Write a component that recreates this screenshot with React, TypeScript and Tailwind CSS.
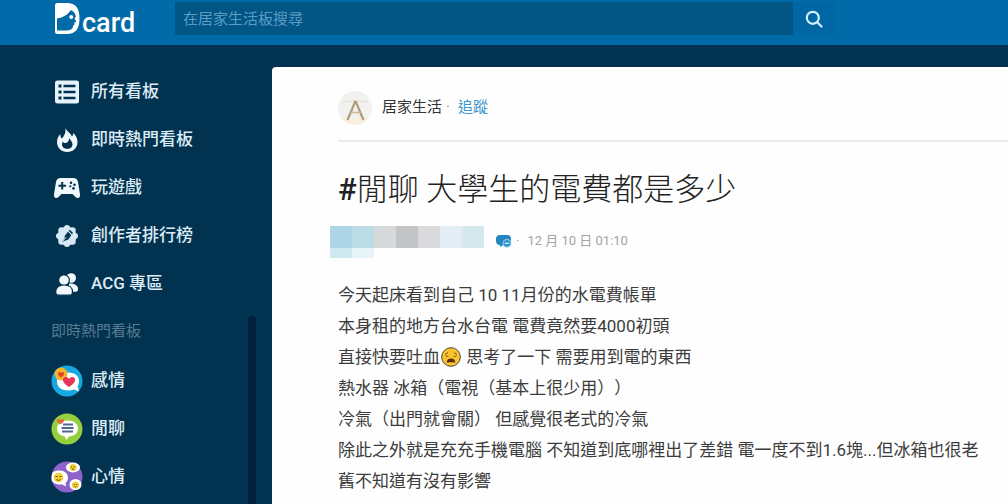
import type { ReactNode } from 'react';

type NavItem = { label: string; icon: ReactNode };

const Logo = () => (
  <a href="/" aria-label="Dcard" className="flex h-full items-center gap-0.5 text-white">
    <svg viewBox="0 0 25 31" className="mb-2 h-[31px] w-[25px]" aria-hidden="true">
      <path d="M0 2.500Q0 0 2.500 0H12c8.500 0 12.500 5 12.500 15.500S20.500 31 12 31H2.500Q0 31 0 28.500z" fill="#fff" />
      <path
        d="M2 15.500c6-1 11.500-4 13.800-8.500 3 1.300 4.600 3.500 5 6.500l-1.300 2 1.800 3.200-2 .8.400 2-1.500.9-.6 2.600c-1.600 1.800-3.600 2.500-6.100 2.500H2z"
        fill="#016aa8"
      />
      <circle cx="16.200" cy="14" r="2" fill="#fff" />
    </svg>
    <span className="text-[27px] leading-8 font-medium">card</span>
  </a>
);

const ListIcon = () => (
  <svg viewBox="0 0 24 24" className="size-6" aria-hidden="true">
    <rect x="0" y="0.500" width="24" height="23" rx="2.500" fill="#e6f3fb" />
    <g fill="#01324f">
      <path d="M3.500 4.500h3v3h-3zM3.500 10.500h3v3h-3zM3.500 16.500h3v3h-3z" />
      <path d="M8.500 4.800h12v2.500h-12zM8.500 10.800h12v2.500h-12zM8.500 16.800h12v2.500h-12z" />
    </g>
  </svg>
);

const FireIcon = () => (
  <svg viewBox="0 0 24 24" className="size-6" aria-hidden="true">
    <path
      d="M10.500 0c.8 3 5 5 6.500 8.500.8-.8 1.200-2.300 1.300-3.500C21 7.500 22.500 10.500 22.500 14c0 6-4.500 10-10.200 10S2 20 2 14.200C2 10.700 3.500 8 5.200 6c0 2 .6 3.600 1.800 4.400C9.500 8 11 4 10.500 0z"
      fill="#f2f9fd"
    />
    <path d="M14.500 10c.3 2 3 3.500 3 6.300 0 2.800-2.200 4.700-5.200 4.700s-5.300-1.900-5.300-4.700c0-1 .3-1.800.8-2.500.8 1 1.700 1.300 2.700 1.200 2.500-.3 3.500-2.500 4-5z" fill="#01324f" />
  </svg>
);

const GameIcon = () => (
  <svg viewBox="0 0 26 24" className="h-6 w-[26px]" aria-hidden="true">
    <path d="M7 2h12c3.200 0 4.400 1.500 5 4l2 12.500c.4 3.500-2.500 4.500-4.500 2.500L18.500 18h-11L4.500 21c-2 2-4.900 1-4.500-2.500L2 6c.6-2.500 1.800-4 5-4z" fill="#f2f9fd" />
    <path d="M7.200 6h2v2.700H12v2H9.200v2.700h-2v-2.700H4.500v-2h2.700z" fill="#01324f" />
    <g fill="#01324f">
      <circle cx="17" cy="6.800" r="1.300" />
      <circle cx="16.300" cy="10.300" r="1.100" />
      <circle cx="20.500" cy="8.800" r="1.300" />
      <circle cx="19.500" cy="12.400" r="1.300" />
    </g>
  </svg>
);

const CreatorIcon = () => (
  <svg viewBox="0 0 24 24" className="size-6" aria-hidden="true">
    <g fill="#d6e7f5">
      <circle cx="12" cy="12" r="9.500" />
      <circle cx="12" cy="4" r="3" />
      <circle cx="17.700" cy="6.300" r="3" />
      <circle cx="20" cy="12" r="3" />
      <circle cx="17.700" cy="17.700" r="3" />
      <circle cx="12" cy="20" r="3" />
      <circle cx="6.300" cy="17.700" r="3" />
      <circle cx="4" cy="12" r="3" />
      <circle cx="6.300" cy="6.300" r="3" />
    </g>
    <path d="M14.800 5.800l3.200 3.200-1 1.200-3.300-3.300zM12.900 7.700l3.400 3.400-3 4.400-6.300 2.300 2.600-3.400.1-2.500z" fill="#01324f" />
    <path d="M8 17l3.500-4" stroke="#d6e7f5" strokeWidth="0.800" />
  </svg>
);

const PeopleIcon = () => (
  <svg viewBox="0 0 24 24" className="size-6" aria-hidden="true">
    <g fill="#f2f9fd">
      <circle cx="16.200" cy="6" r="4.800" />
      <path d="M14 11.500c5.500-.5 9 2 9 5.500 0 2-.5 2.700-2.500 2.700H14z" />
    </g>
    <g fill="#f2f9fd" stroke="#01324f" strokeWidth="1.200">
      <circle cx="9" cy="8.200" r="5.400" />
      <path d="M9 13c5 0 8.500 2.500 8.500 6.700 0 2.500-.8 3.500-3 3.500H3.700c-2.200 0-3-1-3-3.500C.7 15.500 4 13 9 13z" />
    </g>
  </svg>
);

const LoveIcon = () => (
  <svg viewBox="0 0 32 32" className="size-8" aria-hidden="true">
    <circle cx="16" cy="16" r="15.500" fill="#18a8e0" />
    <path d="M17 7.500c7 0 11 3.500 11 8.500 0 2.500-.6 4-1.500 5.200L28 26.500l-5-2c-1.700.7-3.700 1-6 1-7 0-11-4-11-9s4-9 11-9z" fill="#fff" />
    <circle cx="10" cy="9" r="6.500" fill="#f6b42c" />
    <path d="M10 12.500C7.500 10.800 6.500 9.500 7 8c.5-1.300 2.200-1.300 3 0 .8-1.300 2.500-1.300 3 0 .5 1.500-.5 2.800-3 4.500z" fill="#e0432e" />
    <path d="M18 22c-5-3.300-6.800-6-5.800-8.500 1-2.200 4-2.200 5.800.3 1.800-2.500 4.800-2.500 5.800-.3 1 2.500-.8 5.200-5.800 8.500z" fill="#e5365a" />
  </svg>
);

const ChatIcon = () => (
  <svg viewBox="0 0 32 32" className="size-8" aria-hidden="true">
    <circle cx="16" cy="16" r="15.500" fill="#94cf3d" />
    <path d="M16.500 7.500c6.500 0 10.500 3.300 10.500 8s-3.700 7.700-9 8L15.500 27l-2-3.700C8.800 22.500 6 19.700 6 15.500c0-4.700 4-8 10.500-8z" fill="#fff" />
    <path d="M12 11.500h10M10.500 15h12M11 18.500h11" stroke="#52668f" strokeWidth="2" />
    <path d="M9.500 11.500c-3-2-3.800-3.300-3.200-4.700.6-1.200 2.300-1.200 3.200.2.900-1.400 2.600-1.400 3.200-.2.600 1.400-.2 2.700-3.200 4.700z" fill="#e8663c" />
  </svg>
);

const MoodIcon = () => (
  <svg viewBox="0 0 32 32" className="size-8" aria-hidden="true">
    <circle cx="16" cy="16" r="15.500" fill="#8e62c9" />
    <g fill="#fff">
      <path d="M8.500 9.500c5 0 8.500 3 8.500 7.200 0 2.300-1 4-2.500 5.200l.5 3.600-4-2.200c-4 1-8.300-.5-10.300-3.500-.4-3.300 0-6 1-8.600 1.700-1 4-1.700 6.800-1.700z" />
      <ellipse cx="22" cy="6.500" rx="7" ry="5" />
      <ellipse cx="24.500" cy="23.500" rx="6" ry="5.500" />
    </g>
    <g fill="#f4cf35">
      <circle cx="7.500" cy="16.500" r="4.800" />
      <circle cx="22" cy="6.500" r="3.500" />
      <circle cx="24.500" cy="24" r="3.500" />
    </g>
    <g fill="none" stroke="#6b4a1a" strokeWidth="1">
      <path d="M4.500 15.500h2M8.500 15.500h2M5.500 18.500q2 2 4 0" />
      <path d="M20 6h1.200M22.800 6H24M21 8q1 .8 2 0" />
      <path d="M22.500 23.500h1.200M25.300 23.500h1.200M23.500 25.500q1 .8 2 0" />
    </g>
  </svg>
);

const WearyFace = () => (
  <svg viewBox="0 0 20 20" className="mx-px inline-block size-5 align-text-bottom" role="img" aria-label="😩">
    <circle cx="10" cy="10" r="9.300" fill="#fbc62d" stroke="#4a4030" strokeWidth="1" />
    <path d="M4 7.500l3-2M16 7.500l-3-2M4.500 9l3 .4M15.500 9l-3 .4" stroke="#7a5418" strokeWidth="1" fill="none" />
    <path d="M5.700 15.800c0-2.800 1.800-4.300 4.300-4.300s4.300 1.500 4.300 4.300c-1.500-.8-7-.8-8.600 0z" fill="#5a2c14" />
  </svg>
);

const BoardAvatar = () => (
  <svg viewBox="0 0 34 34" className="size-[34px]" aria-hidden="true">
    <circle cx="17" cy="17" r="17" fill="#f1f1f0" />
    <path d="M3.500 27h27a17 17 0 0 1-27 0z" fill="#faeedd" />
    <path d="M4 11q13-2 26 0" stroke="#e8dcc4" strokeWidth="1" fill="none" />
    <path d="M17.500 10L9.500 29M17.500 10l8 19" stroke="#b09b7c" strokeWidth="2.200" fill="none" />
    <path d="M12.500 21.500h10" stroke="#cfb98c" strokeWidth="1.500" />
  </svg>
);

const SchoolBadge = () => (
  <svg viewBox="0 0 16 13" className="h-[13px] w-4" aria-hidden="true">
    <path d="M4 0h7c3 0 4 1.500 4 4v3.500c0 2-1.500 3-3 3H6.500L4 12V10C1.500 10 0 8.500 0 6V4c0-2.500 1.500-4 4-4z" fill="#2386c0" />
    <circle cx="11" cy="8.300" r="4" fill="#2f95cf" stroke="#b8dcf0" strokeWidth="0.800" />
    <path d="M8.800 8.300h4.400" stroke="#d5ecf8" strokeWidth="1.300" />
  </svg>
);

const mainNav: NavItem[] = [
  { label: '所有看板', icon: <ListIcon /> },
  { label: '即時熱門看板', icon: <FireIcon /> },
  { label: '玩遊戲', icon: <GameIcon /> },
  { label: '創作者排行榜', icon: <CreatorIcon /> },
  { label: 'ACG 專區', icon: <PeopleIcon /> },
];

const hotBoards: NavItem[] = [
  { label: '感情', icon: <LoveIcon /> },
  { label: '閒聊', icon: <ChatIcon /> },
  { label: '心情', icon: <MoodIcon /> },
];

const NavList = ({ items }: { items: NavItem[] }) => (
  <ul>
    {items.map((item) => (
      <li key={item.label}>
        <a href="#" className="flex h-12 items-center gap-2 text-[17px] font-medium text-[#dcebf5]">
          <span className="flex w-8 justify-center">{item.icon}</span>
          {item.label}
        </a>
      </li>
    ))}
  </ul>
);

const Sidebar = () => (
  <aside className="flex w-[272px] shrink-0 flex-col pt-[23px]">
    <nav className="pl-[51px]">
      <NavList items={mainNav} />
    </nav>
    <div className="mt-2 flex grow pr-4 pl-[51px]">
      <nav className="grow">
        <h2 className="h-[41px] pt-[3px] text-[15px] leading-6 text-[#587b93]">即時熱門看板</h2>
        <NavList items={hotBoards} />
      </nav>
      <div className="w-2 rounded-t bg-[#01203b]" />
    </div>
  </aside>
);

// anonymised author name
const AuthorMask = () => (
  <div className="w-[154px]" aria-hidden="true">
    <div className="grid h-[22px] grid-cols-7">
      <span className="bg-[#add5e6]" />
      <span className="bg-[#bcdce6]" />
      <span className="bg-[#d6d8da]" />
      <span className="bg-[#c3c4c6]" />
      <span className="bg-[#dadadc]" />
      <span className="bg-[#e2eef3]" />
      <span className="bg-[#d5e8ed]" />
    </div>
    <div className="grid h-[10px] grid-cols-7">
      <span className="bg-[#cfe8ef]" />
      <span className="bg-[#e6f4f8]" />
    </div>
  </div>
);

const Post = () => (
  <main className="min-w-0 grow rounded-tl bg-[#fefefe] pl-[66px] text-[#3c3c3c]">
    <div className="flex h-[75px] items-center gap-2.5 border-b-2 border-[#ececec] pt-2 text-[15px]">
      <BoardAvatar />
      <p className="flex items-center gap-1">
        <span className="text-[#333]">居家生活</span>
        <span className="text-[#999]">·</span>
        <a href="#" className="ml-1 text-[#3a95cd]">追蹤</a>
      </p>
    </div>
    <h1 className="mt-7 text-[31px] leading-10 font-light text-[#222]">
      <span className="font-medium">#</span>閒聊 大學生的電費都是多少
    </h1>
    <div className="mt-4 -ml-2 flex items-start">
      <AuthorMask />
      <div className="ml-3 flex h-[30px] items-center gap-1 text-[13px] text-[#a3a3a3]">
        <SchoolBadge />
        <span>·</span>
        <time className="ml-1">12 月 10 日 01:10</time>
      </div>
    </div>
    <p className="mt-[22px] pb-2 text-[17px] leading-[31px] [text-spacing-trim:space-all]">
      今天起床看到自己 10 11月份的水電費帳單
      <br />
      本身租的地方台水台電 電費竟然要4000初頭
      <br />
      直接快要吐血
      <WearyFace /> 思考了一下 需要用到電的東西
      <br />
      熱水器 冰箱（電視（基本上很少用））
      <br />
      冷氣（出門就會關） 但感覺很老式的冷氣
      <br />
      除此之外就是充充手機電腦 不知道到底哪裡出了差錯 電一度不到1.6塊...但冰箱也很老
      <br />
      舊不知道有沒有影響
    </p>
  </main>
);

export default function App() {
  return (
    <div lang="zh-TW" className="flex min-h-screen flex-col bg-[#01324f] font-['Roboto','Noto_Sans_CJK_TC',sans-serif]">
      <header className="flex h-[45px] items-start bg-[#016aa8] pl-[55px]">
        <div className="flex h-[45px] w-[120px] items-center">
          <Logo />
        </div>
        <form className="mt-0.5 flex w-[660px] max-w-full" role="search">
          <input
            type="text"
            aria-label="搜尋"
            placeholder="在居家生活板搜尋"
            className="h-[33px] min-w-0 grow bg-[#015686] px-2 text-[15px] text-white outline-none placeholder:text-[#5b9cc4]"
          />
          <button type="button" aria-label="送出搜尋" className="flex h-[33px] w-[42px] items-center justify-center bg-[#0167a4]">
            <svg viewBox="0 0 18 18" className="size-[18px]" fill="none" stroke="#d5f1fb" strokeWidth="2.200" strokeLinecap="round" aria-hidden="true">
              <circle cx="7.800" cy="7.800" r="6" />
              <path d="M12.500 12.500l4 4" />
            </svg>
          </button>
        </form>
      </header>
      <div className="flex grow">
        <Sidebar />
        <div className="flex min-w-0 grow pt-[22px]">
          <Post />
        </div>
      </div>
    </div>
  );
}
